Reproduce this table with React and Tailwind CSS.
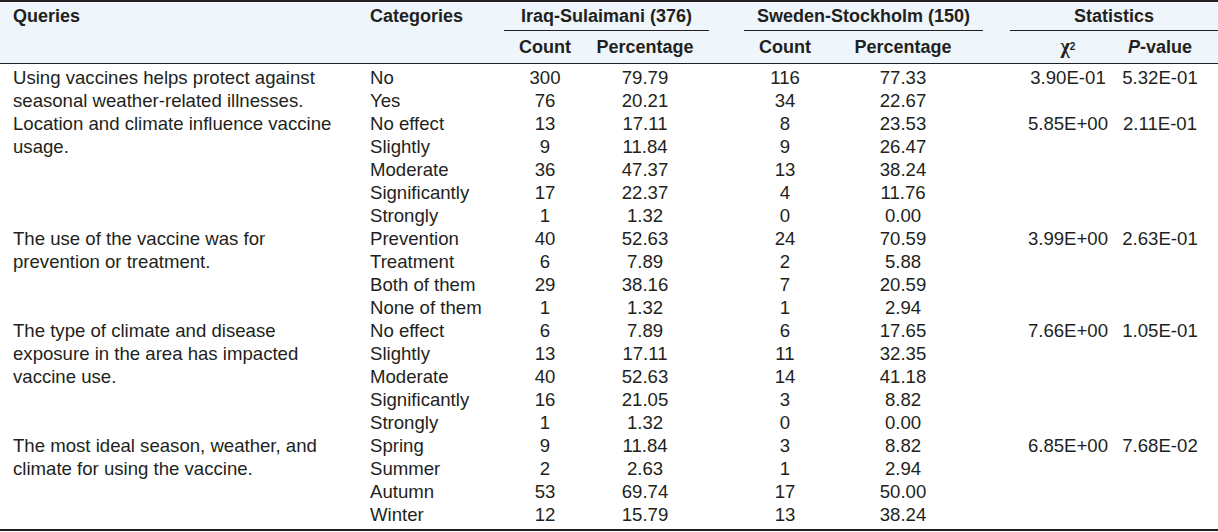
import React from "react";

const groups = [
  {
    q: ["Using vaccines helps protect against", "seasonal weather-related illnesses."],
    chi: "3.90E-01",
    p: "5.32E-01",
    rows: [
      ["No", "300", "79.79", "116", "77.33"],
      ["Yes", "76", "20.21", "34", "22.67"],
    ],
  },
  {
    q: ["Location and climate influence vaccine", "usage."],
    chi: "5.85E+00",
    p: "2.11E-01",
    rows: [
      ["No effect", "13", "17.11", "8", "23.53"],
      ["Slightly", "9", "11.84", "9", "26.47"],
      ["Moderate", "36", "47.37", "13", "38.24"],
      ["Significantly", "17", "22.37", "4", "11.76"],
      ["Strongly", "1", "1.32", "0", "0.00"],
    ],
  },
  {
    q: ["The use of the vaccine was for", "prevention or treatment."],
    chi: "3.99E+00",
    p: "2.63E-01",
    rows: [
      ["Prevention", "40", "52.63", "24", "70.59"],
      ["Treatment", "6", "7.89", "2", "5.88"],
      ["Both of them", "29", "38.16", "7", "20.59"],
      ["None of them", "1", "1.32", "1", "2.94"],
    ],
  },
  {
    q: ["The type of climate and disease", "exposure in the area has impacted", "vaccine use."],
    chi: "7.66E+00",
    p: "1.05E-01",
    rows: [
      ["No effect", "6", "7.89", "6", "17.65"],
      ["Slightly", "13", "17.11", "11", "32.35"],
      ["Moderate", "40", "52.63", "14", "41.18"],
      ["Significantly", "16", "21.05", "3", "8.82"],
      ["Strongly", "1", "1.32", "0", "0.00"],
    ],
  },
  {
    q: ["The most ideal season, weather, and", "climate for using the vaccine."],
    chi: "6.85E+00",
    p: "7.68E-02",
    rows: [
      ["Spring", "9", "11.84", "3", "8.82"],
      ["Summer", "2", "2.63", "1", "2.94"],
      ["Autumn", "53", "69.74", "17", "50.00"],
      ["Winter", "12", "15.79", "13", "38.24"],
    ],
  },
];

const rowGrid =
  "grid grid-cols-[144px_82px_118px_40px_82px_154px_38px_100px_84px_1fr] h-[23px] items-center";

const Row = ({ cells, chi, p }) => {
  const [cat, c1, p1, c2, p2] = cells;
  return (
    <div className={rowGrid}>
      <div className="pl-[10px] whitespace-nowrap">{cat}</div>
      <div className="text-center">{c1}</div>
      <div className="text-center">{p1}</div>
      <div />
      <div className="text-center">{c2}</div>
      <div className="text-center">{p2}</div>
      <div />
      <div className="text-center">{chi}</div>
      <div className="text-center">{p}</div>
      <div />
    </div>
  );
};

export default function App() {
  return (
    <div className="w-[1218px] bg-white text-[18px] leading-[23px] text-[#231f20] font-['Liberation_Sans',Arial,sans-serif]">
      {/* header */}
      <div className="bg-[#eef6fb] border-t-2 border-b border-[#231f20] font-bold">
        <div className="flex h-[29px]">
          <div className="w-[360px] pl-[13px] flex items-center">Queries</div>
          <div className="w-[144px] pl-[10px] flex items-center">Categories</div>
          <div className="w-[205px] border-b border-[#231f20] flex items-center justify-center">
            Iraq-Sulaimani (376)
          </div>
          <div className="w-[35px]" />
          <div className="w-[239px] border-b border-[#231f20] flex items-center justify-center">
            Sweden-Stockholm (150)
          </div>
          <div className="w-[27px]" />
          <div className="w-[208px] border-b border-[#231f20] flex items-center justify-center">
            Statistics
          </div>
        </div>
        <div className="flex h-[32px]">
          <div className="w-[360px]" />
          <div className="grid grid-cols-[144px_82px_118px_40px_82px_154px_38px_100px_84px_1fr] flex-1 items-center">
            <div />
            <div className="text-center">Count</div>
            <div className="text-center">Percentage</div>
            <div />
            <div className="text-center">Count</div>
            <div className="text-center">Percentage</div>
            <div />
            <div className="text-center">
              <span className="font-['Liberation_Serif',serif] text-[20px]">χ</span>
              <sup className="text-[10px] relative -top-[3px]">2</sup>
            </div>
            <div className="text-center">
              <span className="italic">P</span>-value
            </div>
            <div />
          </div>
        </div>
      </div>

      {/* body */}
      <div className="pt-[2px] pb-[3px] border-b-2 border-[#231f20] text-[18.6px]">
        {groups.map((g, gi) => (
          <div key={gi} className="flex">
            <div className="w-[360px] pl-[13px]">
              {g.q.map((line, li) => (
                <div key={li} className="h-[23px] whitespace-nowrap">
                  {line}
                </div>
              ))}
            </div>
            <div className="flex-1">
              {g.rows.map((r, ri) => (
                <Row
                  key={ri}
                  cells={r}
                  chi={ri === 0 ? g.chi : ""}
                  p={ri === 0 ? g.p : ""}
                />
              ))}
            </div>
          </div>
        ))}
      </div>
    </div>
  );
}
